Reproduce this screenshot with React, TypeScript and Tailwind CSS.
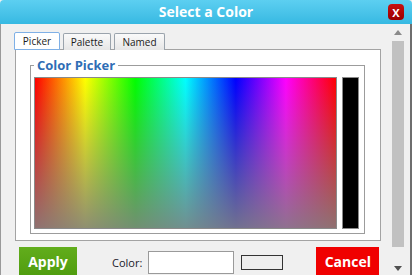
import React from "react";

const font = { fontFamily: '"Open Sans", "Noto Sans", sans-serif' };

export default function App() {
  return (
    <div className="w-[412px] h-[275px] overflow-hidden flex flex-col bg-[#f0f0f0]" style={font}>
      {/* Title bar */}
      <div className="h-[24px] shrink-0 grid grid-cols-[1fr_auto_1fr] items-center rounded-t-[4px] bg-gradient-to-b from-[#5ccff1] to-[#36b9e2]">
        <div />
        <div className="text-white font-bold text-[14px] leading-none">Select a Color</div>
        <div className="flex justify-end pr-[8px]">
          <div className="w-[16px] h-[16px] rounded-[4px] bg-gradient-to-b from-[#c81010] to-[#9a0000] flex items-center justify-center text-white font-bold text-[11px] leading-none">
            X
          </div>
        </div>
      </div>

      {/* Body */}
      <div className="flex-1 flex border-l border-l-[#9a9a9a] border-r-2 border-r-[#6e6e6e] border-b-2 border-b-[#555]">
        {/* Content */}
        <div className="w-[388px] shrink-0 pl-[13px] pt-[8px]">
          {/* Tabs */}
          <div className="flex items-end gap-[3px] relative z-10">
            <div className="w-[46px] h-[18px] border border-[#7fb0e6] rounded-t-[2px] bg-white flex items-center justify-center text-[10px] text-[#1a1a1a] leading-none">
              Picker
            </div>
            <div className="w-[48px] h-[17px] border border-[#9aa3ac] border-b-0 rounded-t-[2px] bg-gradient-to-b from-[#fafafa] to-[#e6e6e6] flex items-center justify-center text-[10px] text-[#1a1a1a] leading-none">
              Palette
            </div>
            <div className="w-[51px] h-[17px] border border-[#9aa3ac] border-b-0 rounded-t-[2px] bg-gradient-to-b from-[#fafafa] to-[#e6e6e6] flex items-center justify-center text-[10px] text-[#1a1a1a] leading-none">
              Named
            </div>
          </div>

          {/* Panel */}
          <div className="-mt-px ml-[1px] w-[366px] h-[192px] border border-[#a3a3a3] bg-white pt-[7px] pl-[14px]">
            <fieldset className="w-[335px] h-[177px] border border-[#9c9c9c] pl-[3px] pr-[5px] pb-[3px]">
              <legend className="ml-[0px] px-[3px] text-[13px] leading-[16px] font-bold text-[#2f6db5]">
                Color Picker
              </legend>
              <div className="flex gap-[5px] pt-[4px]">
                <div className="w-[303px] h-[152px] border border-[#8a8a8a] bg-[linear-gradient(to_bottom,rgba(128,128,128,0),rgba(128,128,128,0.88)),linear-gradient(to_right,#ff0000,#ffff00,#00ff00,#00ffff,#0000ff,#ff00ff,#ff0000)]" />
                <div className="w-[17px] h-[152px] border border-[#8a8a8a] bg-black" />
              </div>
            </fieldset>
          </div>

          {/* Bottom row */}
          <div className="mt-[6px] flex items-center">
            <div className="ml-[5px] w-[58px] h-[30px] bg-gradient-to-b from-[#62ad1c] to-[#4f9c0e] flex items-center justify-center text-white font-bold text-[14px] leading-none">
              Apply
            </div>
            <div className="ml-[35px] text-[11px] text-[#1a1a2a] leading-none">Color:</div>
            <div className="ml-[6px] w-[86px] h-[23px] border border-[#9a9a9a] bg-white" />
            <div className="ml-[7px] w-[42px] h-[15px] border border-[#333] bg-[#eeeeee]" />
            <div className="ml-[33px] w-[63px] h-[30px] bg-[#f00000] flex items-center justify-center text-white font-bold text-[14px] leading-none">
              Cancel
            </div>
          </div>
        </div>

        {/* Scrollbar */}
        <div className="w-[17px] shrink-0 flex flex-col items-center">
          <div className="h-[17px] flex items-center justify-center">
            <svg width="8" height="5" viewBox="0 0 8 5">
              <path d="M0 5 L4 0 L8 5 Z" fill="#8a8a8a" />
            </svg>
          </div>
          <div className="w-[12px] h-[206px] bg-[#c1c1c1]" />
          <div className="flex-1" />
          <div className="h-[17px] flex items-center justify-center">
            <svg width="8" height="5" viewBox="0 0 8 5">
              <path d="M0 0 L8 0 L4 5 Z" fill="#505050" />
            </svg>
          </div>
        </div>
      </div>
    </div>
  );
}
